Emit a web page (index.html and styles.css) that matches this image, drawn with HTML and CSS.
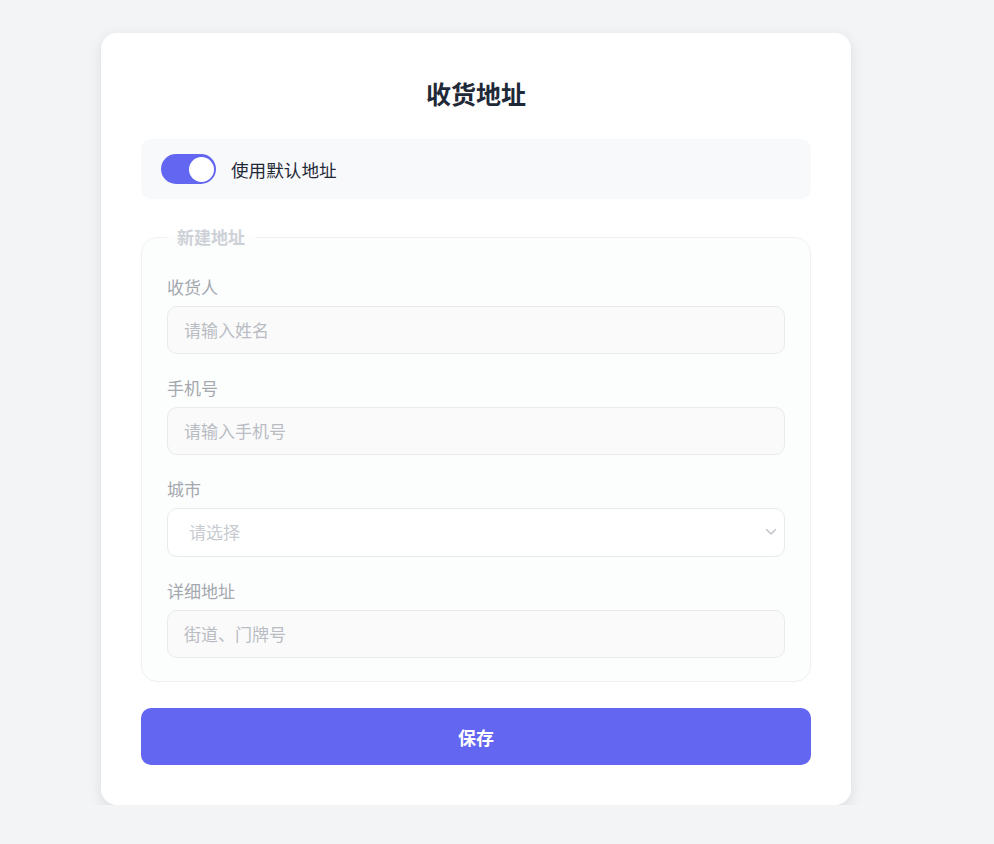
FILE: index.html
```html
<!DOCTYPE html>
<html lang="zh-CN">
<head>
<meta charset="utf-8">
<title>收货地址</title>
<link rel="stylesheet" href="styles.css">
</head>
<body>
<main class="card">
  <h1 class="title">收货地址</h1>
  <label class="toggle-row">
    <span class="switch"><span class="knob"></span></span>
    <span class="toggle-text">使用默认地址</span>
  </label>
  <fieldset class="group" disabled>
    <legend class="legend">新建地址</legend>
    <div class="field">
      <label class="label">收货人</label>
      <input class="input" type="text" placeholder="请输入姓名">
    </div>
    <div class="field">
      <label class="label">手机号</label>
      <input class="input" type="text" placeholder="请输入手机号">
    </div>
    <div class="field">
      <label class="label">城市</label>
      <div class="select">
        <span class="select-text">请选择</span>
        <svg class="chev" width="12" height="8" viewBox="0 0 12 8"><path d="M1.5 1.5 L6 6 L10.5 1.5" fill="none" stroke="#c4c6ca" stroke-width="1.6" stroke-linecap="round" stroke-linejoin="round"/></svg>
      </div>
    </div>
    <div class="field">
      <label class="label">详细地址</label>
      <input class="input" type="text" placeholder="街道、门牌号">
    </div>
  </fieldset>
  <button class="save" type="button">保存</button>
</main>
</body>
</html>
```
FILE: styles.css
```css
* { box-sizing: border-box; }
html, body { margin: 0; padding: 0; }
body {
  background: #f3f4f6;
  font-family: "Noto Sans CJK SC", "Noto Sans", sans-serif;
  padding-top: 33px;
  padding-left: 101px;
}
.card {
  width: 750px;
  background: #fff;
  border-radius: 16px;
  box-shadow: 0 4px 14px rgba(0,0,0,0.10);
  padding: 40px 40px 40px;
}
.title {
  margin: 0 0 26px;
  font-size: 25px;
  line-height: 40px;
  font-weight: 700;
  text-align: center;
  color: #1f2937;
}
.toggle-row {
  display: flex;
  align-items: center;
  gap: 15px;
  height: 60px;
  padding: 0 20px;
  background: #f8f9fb;
  border-radius: 10px;
}
.switch {
  width: 55px;
  height: 30px;
  border-radius: 15px;
  background: #6366f1;
  display: flex;
  align-items: center;
  justify-content: flex-end;
  padding-right: 2px;
}
.knob {
  width: 25px;
  height: 25px;
  border-radius: 50%;
  background: #fff;
}
.toggle-text {
  font-size: 17.6px;
  color: #1f2937;
}
.group {
  margin: 26px 0 0;
  padding: 26px 25px 23px;
  border: 1px solid #eef0f2;
  border-radius: 16px;
  background: #fcfdfd;
  display: flex;
  flex-direction: column;
  gap: 22px;
  min-width: 0;
}
.legend {
  padding: 0 10px;
  margin-left: 0;
  font-size: 17px;
  line-height: 24px;
  font-weight: 700;
  color: #cdd1d7;
}
.field {
  display: flex;
  flex-direction: column;
  gap: 7px;
}
.label {
  font-size: 17px;
  line-height: 24px;
  color: #a4a8af;
}
.input, .select {
  width: 100%;
  height: 48px;
  border: 1px solid #e9eaed;
  border-radius: 10px;
  background: #fafafb;
  padding: 0 16px 2px;
  font-family: inherit;
  font-size: 17px;
  color: #374151;
  outline: none;
}
.input::placeholder { color: #b9bcc2; }
.select {
  background: #fff;
  display: flex;
  align-items: center;
  justify-content: space-between;
  padding: 0 7px 2px 21px;
  height: 49px;
}
.select-text { color: #c9ccd1; }
.save {
  display: block;
  width: 100%;
  height: 57px;
  margin-top: 26px;
  border: none;
  border-radius: 10px;
  background: #6366f1;
  color: #fff;
  font-family: inherit;
  font-size: 18px;
  font-weight: 700;
}
```
